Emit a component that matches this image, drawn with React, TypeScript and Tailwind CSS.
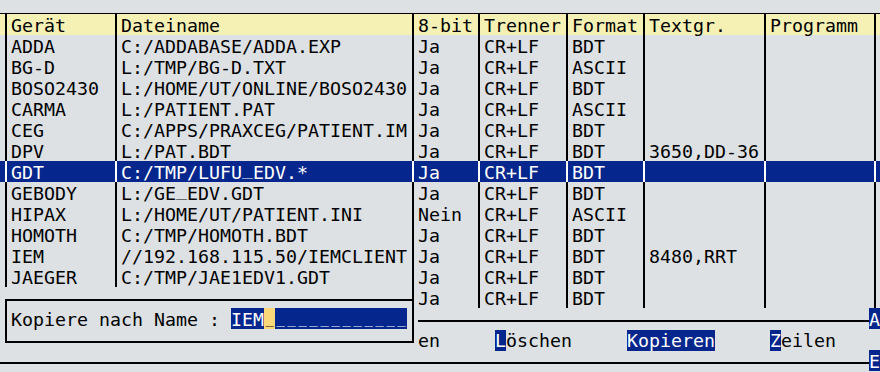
import React from 'react';

interface Entry {
  geraet: string;
  datei: string;
  bit8: string;
  trenner: string;
  format: string;
  textgr: string;
  programm: string;
}

const ENTRIES: Entry[] = [
  { geraet: 'ADDA', datei: 'C:/ADDABASE/ADDA.EXP', bit8: 'Ja', trenner: 'CR+LF', format: 'BDT', textgr: '', programm: '' },
  { geraet: 'BG-D', datei: 'L:/TMP/BG-D.TXT', bit8: 'Ja', trenner: 'CR+LF', format: 'ASCII', textgr: '', programm: '' },
  { geraet: 'BOSO2430', datei: 'L:/HOME/UT/ONLINE/BOSO2430', bit8: 'Ja', trenner: 'CR+LF', format: 'BDT', textgr: '', programm: '' },
  { geraet: 'CARMA', datei: 'L:/PATIENT.PAT', bit8: 'Ja', trenner: 'CR+LF', format: 'ASCII', textgr: '', programm: '' },
  { geraet: 'CEG', datei: 'C:/APPS/PRAXCEG/PATIENT.IM', bit8: 'Ja', trenner: 'CR+LF', format: 'BDT', textgr: '', programm: '' },
  { geraet: 'DPV', datei: 'L:/PAT.BDT', bit8: 'Ja', trenner: 'CR+LF', format: 'BDT', textgr: '3650,DD-36', programm: '' },
  { geraet: 'GDT', datei: 'C:/TMP/LUFU_EDV.*', bit8: 'Ja', trenner: 'CR+LF', format: 'BDT', textgr: '', programm: '' },
  { geraet: 'GEBODY', datei: 'L:/GE_EDV.GDT', bit8: 'Ja', trenner: 'CR+LF', format: 'BDT', textgr: '', programm: '' },
  { geraet: 'HIPAX', datei: 'L:/HOME/UT/PATIENT.INI', bit8: 'Nein', trenner: 'CR+LF', format: 'ASCII', textgr: '', programm: '' },
  { geraet: 'HOMOTH', datei: 'C:/TMP/HOMOTH.BDT', bit8: 'Ja', trenner: 'CR+LF', format: 'BDT', textgr: '', programm: '' },
  { geraet: 'IEM', datei: '//192.168.115.50/IEMCLIENT', bit8: 'Ja', trenner: 'CR+LF', format: 'BDT', textgr: '8480,RRT', programm: '' },
  { geraet: 'JAEGER', datei: 'C:/TMP/JAE1EDV1.GDT', bit8: 'Ja', trenner: 'CR+LF', format: 'BDT', textgr: '', programm: '' },
];

const SELECTED = 'GDT';

// Senkrechte Trennlinie, eine Zeichenzelle breit
function VLine({ light }: { light?: boolean }) {
  return (
    <div className="w-[11px] h-full shrink-0 pl-[5px]">
      <div className={`w-[2px] h-full ${light ? 'bg-white' : 'bg-black'}`} />
    </div>
  );
}

// Unterstrich etwas hoeher setzen (DejaVu zeichnet ihn unter der Grundlinie)
function withUnderscores(s: string) {
  return s.split(/(_)/).map((p, i) =>
    p === '_' ? (
      <span key={i} className="inline-block -translate-y-[4px]">_</span>
    ) : (
      <React.Fragment key={i}>{p}</React.Fragment>
    ),
  );
}

// Eingabefeld-Unterstrich: schmaler als die Zelle, damit Luecken bleiben
function Blank() {
  return (
    <span className="inline-block w-[11px] h-[21px] align-top">
      <span className="inline-block scale-x-[0.75] -translate-y-[3px]">_</span>
    </span>
  );
}

function TableRow({ e, header, selected }: { e: Entry; header?: boolean; selected?: boolean }) {
  const bg = header ? 'bg-[#f5f1b4] text-black' : selected ? 'bg-[#05268c] text-white' : 'text-black';
  return (
    <div className={`flex h-[21px] leading-[23px] whitespace-pre ${bg}`}>
      <VLine light={selected} />
      <div className="w-[99px] shrink-0">{e.geraet}</div>
      <VLine light={selected} />
      <div className="w-[286px] shrink-0">{withUnderscores(e.datei)}</div>
      <VLine light={selected} />
      <div className="w-[55px] shrink-0">{e.bit8}</div>
      <VLine light={selected} />
      <div className="w-[77px] shrink-0">{e.trenner}</div>
      <VLine light={selected} />
      <div className="w-[66px] shrink-0">{e.format}</div>
      <VLine light={selected} />
      <div className="w-[110px] shrink-0">{e.textgr}</div>
      <VLine light={selected} />
      <div className="w-[99px] shrink-0">{e.programm}</div>
      <VLine light={selected} />
    </div>
  );
}

export default function App() {
  const head: Entry = {
    geraet: 'Gerät',
    datei: 'Dateiname',
    bit8: '8-bit',
    trenner: 'Trenner',
    format: 'Format',
    textgr: 'Textgr.',
    programm: 'Programm',
  };

  return (
    <div className="w-[880px] h-[372px] overflow-hidden bg-[#dde1e4] text-black font-['DejaVu_Sans_Mono',monospace] text-[18.27px]">
      <div className="h-[13px]" />
      <div className="h-[1px] bg-black" />
      <TableRow e={head} header />
      {ENTRIES.map((e) => (
        <TableRow key={e.geraet} e={e} selected={e.geraet === SELECTED} />
      ))}

      {/* Dialog + Restzeilen */}
      <div className="flex">
        <div className="w-[418px] h-[63px] shrink-0 flex flex-col">
          <div className="ml-[412px] w-[2px] h-[12px] bg-black" />
          <div className="ml-[5px] w-[409px] h-[44px] border-2 border-black pl-[4px] pt-[7px]">
            <div className="flex h-[21px] leading-[23px] whitespace-pre">
              <span>Kopiere nach Name : </span>
              <span className="bg-[#05268c] text-white">IEM</span>
              <span className="bg-[#fbd97b] text-black"><Blank /></span>
              <span className="flex bg-[#05268c] text-white">
                {Array.from({ length: 12 }).map((_, i) => (
                  <Blank key={i} />
                ))}
              </span>
            </div>
          </div>
        </div>
        <div className="w-[462px] shrink-0 flex flex-col">
          <div className="flex h-[21px] leading-[23px] whitespace-pre">
            <div className="w-[55px] shrink-0">Ja</div>
            <VLine />
            <div className="w-[77px] shrink-0">CR+LF</div>
            <VLine />
            <div className="w-[66px] shrink-0">BDT</div>
            <VLine />
            <div className="w-[110px] shrink-0" />
            <VLine />
            <div className="w-[99px] shrink-0" />
            <VLine />
          </div>
          <div className="flex h-[21px] leading-[23px]">
            <div className="w-[451px] shrink-0 pt-[12px]">
              <div className="h-[2px] bg-black" />
            </div>
            <div className="w-[11px] shrink-0 bg-[#05268c] text-white">A</div>
          </div>
          <div className="flex h-[21px] leading-[23px] whitespace-pre">
            <div className="w-[77px] shrink-0">en</div>
            <div className="w-[132px] shrink-0">
              <span className="bg-[#05268c] text-white">L</span>öschen
            </div>
            <div className="w-[143px] shrink-0">
              <span className="bg-[#05268c] text-white">Kopieren</span>
            </div>
            <div className="w-[99px] shrink-0">
              <span className="bg-[#05268c] text-white">Z</span>eilen
            </div>
          </div>
        </div>
      </div>

      <div className="flex h-[21px] leading-[23px]">
        <div className="w-[869px] shrink-0 pt-[12px]">
          <div className="h-[2px] bg-black" />
        </div>
        <div className="w-[11px] shrink-0 bg-[#05268c] text-white">E</div>
      </div>
    </div>
  );
}
